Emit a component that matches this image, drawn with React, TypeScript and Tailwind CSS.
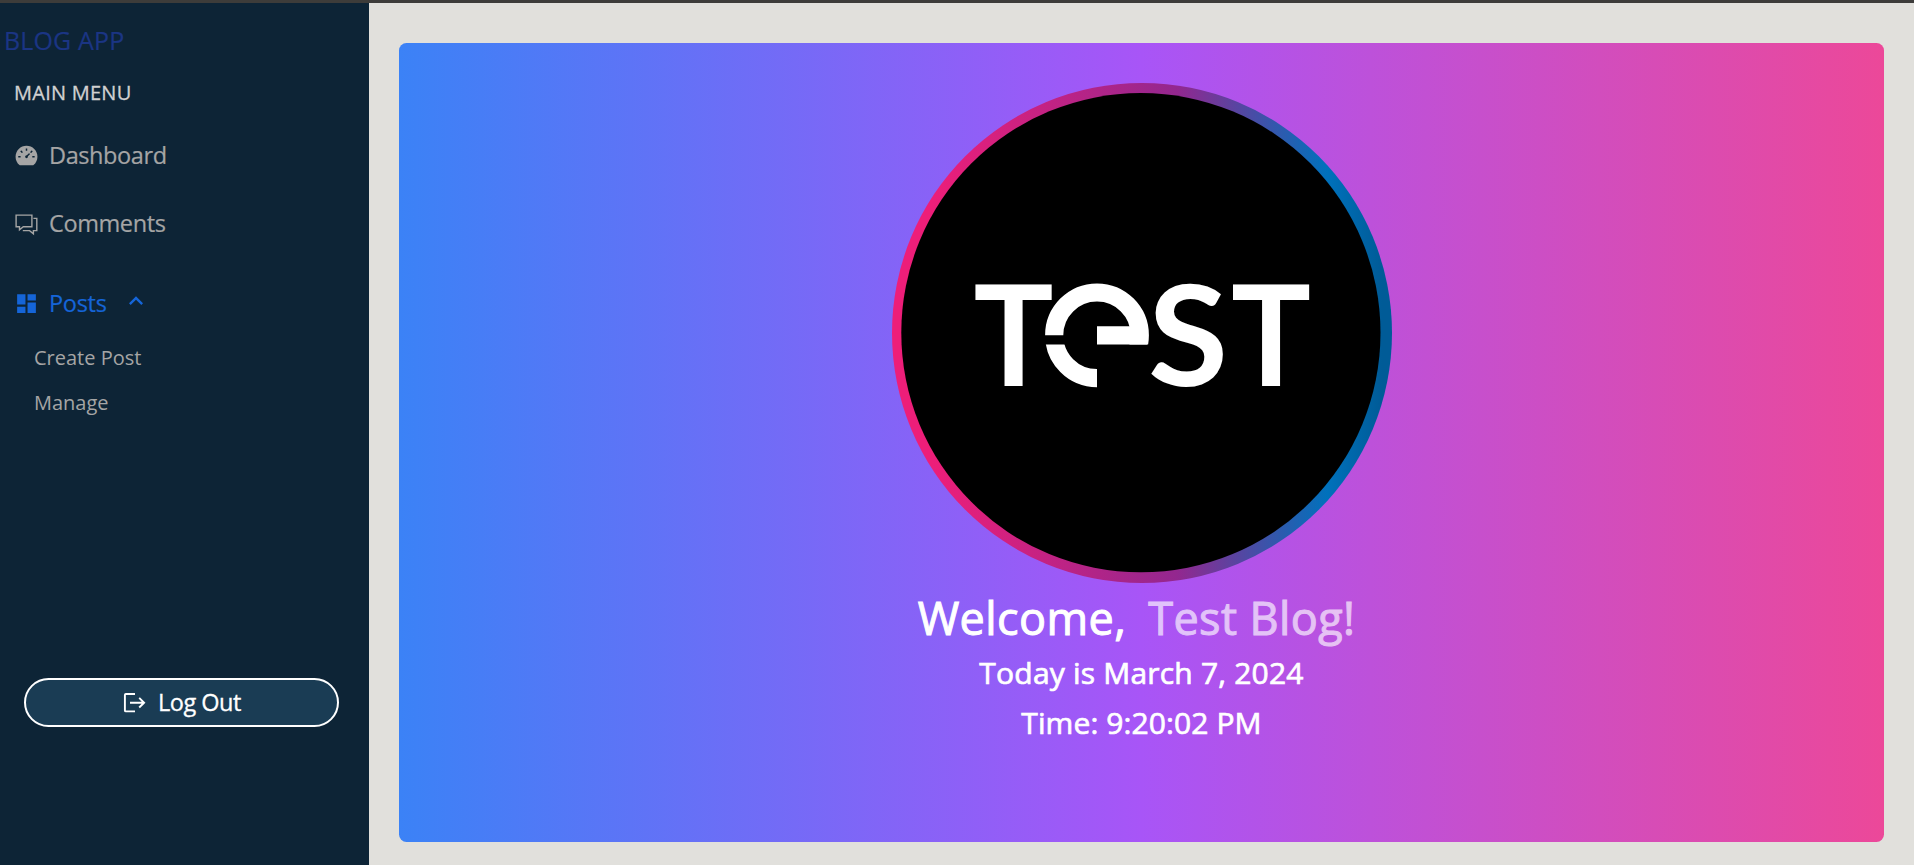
import type { ReactNode } from "react";
import { AiFillDashboard } from "react-icons/ai";
import { MdDashboard, MdKeyboardArrowUp } from "react-icons/md";

function CommentsIcon() {
  return (
    <svg width="25" height="25" viewBox="0 0 25 25" fill="none" stroke="currentColor" strokeWidth="1.4">
      <path d="M2.1 3.1h15.8v11.6h-8.6l-3.8 3.1v-3.1H2.1z" />
      <path d="M19.4 6.4h3.4v12.2h-3.4v3.2l-3.8-3.2H8.8" />
    </svg>
  );
}

function LogOutIcon() {
  return (
    <svg width="25" height="25" viewBox="0 0 25 25" fill="none" stroke="currentColor" strokeWidth="1.9">
      <path d="M13 4H3.9a1 1 0 0 0-1 1v15.4a1 1 0 0 0 1 1H13" />
      <path d="M8 12.7h14.2M17.2 7.9l4.9 4.8-4.9 4.8" />
    </svg>
  );
}

function Logo() {
  return (
    <svg className="size-[500px]" viewBox="0 0 500 500" aria-label="Test">
      <defs>
        <linearGradient id="ring" x1="0" x2="1" y1="0" y2="0">
          <stop offset="0" stopColor="#ed1e79" />
          <stop offset="0.08" stopColor="#ed1e79" />
          <stop offset="0.57" stopColor="#93278f" />
          <stop offset="0.87" stopColor="#0071bc" />
          <stop offset="0.98" stopColor="#005b97" />
        </linearGradient>
        <clipPath id="upper">
          <path d="M140 190h130v71.5h-65v-9.2h-65z" />
        </clipPath>
        <clipPath id="lower">
          <rect x="140" y="261.5" width="65" height="50" />
        </clipPath>
      </defs>
      <circle cx="250" cy="250" r="250" fill="url(#ring)" />
      <circle cx="248.9" cy="249.7" r="239.6" />
      <g fill="none" stroke="#fff" strokeWidth="18.2">
        <circle cx="205" cy="252.3" r="42.8" clipPath="url(#upper)" />
        <circle cx="205" cy="252.3" r="42.8" clipPath="url(#lower)" />
        <path d="M205 252.4h50" />
      </g>
      <g className="font-['Lato',sans-serif] text-[140.5px] font-bold" fill="#fff" textAnchor="middle">
        <text transform="translate(121.5 303) scale(0.95 1)">T</text>
        <text transform="translate(296 303) scale(1.04 1)">S</text>
        <text transform="translate(379 303) scale(0.95 1)">T</text>
      </g>
    </svg>
  );
}

function MenuItem({ icon, label }: { icon: ReactNode; label: string }) {
  return (
    <li className="flex items-center gap-[10px] text-[23.5px] leading-[30px] tracking-[-0.4px] [-webkit-text-stroke:0.2px]">
      {icon}
      <span className="pb-[2px]">{label}</span>
    </li>
  );
}

export default function App() {
  return (
    <div className="flex h-[865px] flex-col overflow-hidden bg-[#e1e0dc] font-['Open_Sans',sans-serif]">
      <div className="h-[3px] shrink-0 bg-[#3d3c3a]" />
      <div className="flex flex-1">
        <aside className="flex w-[369px] shrink-0 flex-col bg-[#0d2436] pt-[20px] text-[#a5a5a5]">
          <h1 className="pl-1 text-[25px] leading-[34px] tracking-[0.15px] text-[#1b3584] [-webkit-text-stroke:0.2px]">
            BLOG APP
          </h1>
          <h2 className="mt-[22px] pl-[14px] text-[20px] leading-[28px] tracking-[0.25px] text-[#d1d1d1] [-webkit-text-stroke:0.3px]">
            MAIN MENU
          </h2>
          <ul className="mt-[33px] pl-[14px]">
            <MenuItem icon={<AiFillDashboard size={25} className="mb-px" />} label="Dashboard" />
            <li className="h-[36px]" />
            <MenuItem icon={<CommentsIcon />} label="Comments" />
          </ul>
          <div className="mt-[47px] flex items-center pl-[14px] text-[23.5px] leading-[30px] tracking-[-0.3px] text-[#1565d8] [-webkit-text-stroke:0.2px]">
            <MdDashboard size={25} />
            <span className="ml-[10px] pb-px">Posts</span>
            <MdKeyboardArrowUp size={28} className="mb-[5px] ml-[15px]" />
          </div>
          <ul className="mt-[24px] flex flex-col gap-[17px] pl-[34px] text-[20px] leading-[28px]">
            <li>Create Post</li>
            <li>Manage</li>
          </ul>
          <button className="mt-[261px] ml-[24px] flex h-[49px] w-[315px] items-center justify-center gap-[11px] rounded-full border-2 border-white bg-[#1a3c54] text-[23.5px] tracking-[-0.5px] text-white [-webkit-text-stroke:0.3px]">
            <LogOutIcon />
            <span>Log Out</span>
          </button>
        </aside>
        <main className="flex-1 pt-[40px] pr-[30px] pb-[23px] pl-[30px]">
          <section className="flex h-[799px] flex-col items-center rounded-[7.5px] bg-linear-to-r/srgb from-[#3b82f6] via-[#a855f7] to-[#ec4899] pt-[40px] text-white">
            <Logo />
            <h2 className="mt-[10px] flex gap-[22px] pr-[10px] text-[45px] leading-[50px] tracking-[0.4px] [-webkit-text-stroke:1px]">
              <span>Welcome,</span>
              <span className="opacity-65">Test Blog!</span>
            </h2>
            <p className="mt-[10px] text-[30px] leading-[40px] tracking-[0.2px] [-webkit-text-stroke:0.7px]">
              Today is March 7, 2024
            </p>
            <p className="mt-[10px] text-[30px] leading-[40px] tracking-[0.1px] [-webkit-text-stroke:0.7px]">
              Time: 9:20:02 PM
            </p>
          </section>
        </main>
      </div>
    </div>
  );
}
